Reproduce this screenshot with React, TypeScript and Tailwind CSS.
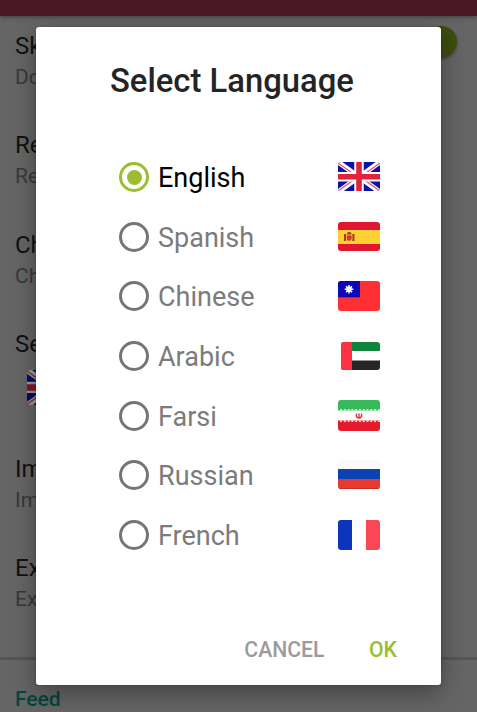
import type { ReactNode } from "react";

function UnitedKingdom() {
  return (
    <>
      <rect width="42" height="30" fill="#0b12a8" />
      <path d="M0 0L42 30M42 0L0 30" stroke="#fff" strokeWidth="5" />
      <path d="M0 1L17 13M42 1L25 13M0 29L17 17M42 29L25 17" stroke="#f0535f" strokeWidth="1.3" />
      <path d="M21 0V30M0 14.800H42" stroke="#fff" strokeWidth="9.500" />
      <path d="M21 0V30M0 14.800H42" stroke="#e2233b" strokeWidth="5.600" />
    </>
  );
}

function Spain() {
  return (
    <>
      <rect width="42" height="30" fill="#df1730" />
      <rect y="8" width="42" height="14" fill="#ffd034" />
      <path d="M7 12.500V18.500M15.400 12.500V18.500" stroke="#b8322c" strokeWidth="2" />
      <path d="M5.800 12.800H8.200M14.200 12.800H16.600M5.800 18.300H8.200M14.200 18.300H16.600" stroke="#8e3b2b" strokeWidth="1" />
      <path d="M8.800 13.500H13.600V16.700Q13.600 18.800 11.200 18.800T8.800 16.700Z" fill="#c52b2b" />
      <path d="M8.800 12.600Q8.800 10 11.200 9.800Q13.600 10 13.600 12.600Z" fill="#a13a24" />
      <path d="M10.300 15V17.500M12.200 15V17.500" stroke="#e58a50" strokeWidth=".5" />
    </>
  );
}

function Taiwan() {
  return (
    <>
      <rect width="42" height="30" fill="#ff3033" />
      <rect width="22" height="16.300" fill="#0b08b4" />
      <path d="M11 4V12.600M6.700 8.300H15.300M8 5.300L14 11.300M14 5.300L8 11.300" stroke="#fff" strokeWidth="1.500" />
      <circle cx="11" cy="8.300" r="2.700" fill="#fff" />
    </>
  );
}

function Emirates() {
  return (
    <>
      <rect width="39" height="28" fill="#fff" />
      <rect width="39" height="9" fill="#0f843d" />
      <rect y="18.500" width="39" height="9.500" fill="#262626" />
      <rect width="11" height="28" fill="#ff3044" />
    </>
  );
}

function Iran() {
  return (
    <>
      <rect width="42" height="31" fill="#fff" />
      <rect width="42" height="10.500" fill="#37b85a" />
      <rect y="20.500" width="42" height="10.500" fill="#e31b2d" />
      <path d="M2 9.800H42" stroke="#d8f4df" strokeWidth="1.500" strokeDasharray="1.9 1.9" />
      <path d="M2 21.200H42" stroke="#ffe0e2" strokeWidth="1.500" strokeDasharray="1.9 1.9" />
      <path d="M18.800 13.500Q17.300 16.500 20.300 18M23.200 13.500Q24.700 16.500 21.700 18M21 13.500V18.700" fill="none" stroke="#dc3540" strokeWidth="1.400" />
    </>
  );
}

function Russia() {
  return (
    <>
      <rect width="42" height="29" fill="#fafafa" />
      <rect y="9" width="42" height="10" fill="#0b43b5" />
      <rect y="19" width="42" height="10" fill="#e63a2f" />
      <path d="M0 28.500H42" stroke="#cf2923" />
    </>
  );
}

function France() {
  return (
    <>
      <rect width="42" height="30" fill="#fff" />
      <rect width="14" height="30" fill="#0d34bd" />
      <rect x="28" width="14" height="30" fill="#fa4655" />
      <path d="M14 .25H28M14 29.750H28" stroke="#eee" strokeWidth=".5" />
    </>
  );
}

function Flag({ width = 42, height = 30, children }: { width?: number; height?: number; children: ReactNode }) {
  return (
    <svg width={width} height={height} viewBox={`0 0 ${width} ${height}`} className="-mt-px shrink-0 rounded-[3px]">
      {children}
    </svg>
  );
}

const languages = [
  { name: "English", flag: <Flag height={29}><UnitedKingdom /></Flag> },
  { name: "Spanish", flag: <Flag height={29}><Spain /></Flag> },
  { name: "Chinese", flag: <Flag><Taiwan /></Flag> },
  { name: "Arabic", flag: <Flag width={39} height={28}><Emirates /></Flag> },
  { name: "Farsi", flag: <Flag height={31}><Iran /></Flag> },
  { name: "Russian", flag: <Flag height={29}><Russia /></Flag> },
  { name: "French", flag: <Flag><France /></Flag> },
];

function Radio({ checked }: { checked: boolean }) {
  return (
    <span
      className={`flex size-[30px] shrink-0 items-center justify-center rounded-full border-[3px] ${
        checked ? "border-[#9abe2e]" : "border-[#757575]"
      }`}
    >
      {checked && <span className="size-[15px] rounded-full bg-[#9abe2e]" />}
    </span>
  );
}

function Setting({ title, note }: { title: string; note?: string }) {
  return (
    <div className={note ? "h-[99.3px]" : "h-[125.2px]"}>
      <div className="text-[24px] leading-[30px] text-[#111]">{title}</div>
      {note ? (
        <div className="mt-[4px] text-[21px] leading-[24px] text-[#393939]">{note}</div>
      ) : (
        <div className="mt-[12.500px] ml-[12px] brightness-[.6]">
          <Flag width={50} height={35}>
            <g transform="scale(1.19 1.18)"><UnitedKingdom /></g>
          </Flag>
        </div>
      )}
    </div>
  );
}

export default function App() {
  return (
    <div className="relative h-[712px] w-[477px] overflow-hidden bg-[#656565] font-['Roboto','Liberation_Sans',sans-serif]">
      <div className="h-4 bg-[#4c1724] shadow-[0_1px_5px_rgba(0,0,0,0.4)]" />
      <div className="flex h-[641px] justify-between pt-[15px] pl-[15px]">
        <div>
          <Setting title="Sk" note="Do" />
          <Setting title="Re" note="Re" />
          <Setting title="Ch" note="Ch" />
          <Setting title="Se" />
          <Setting title="Im" note="Im" />
          <Setting title="Ex" note="Ex" />
        </div>
        <div className="-mt-[5px] mr-5 size-[31px] rounded-full bg-[#3d4d0f] shadow-[0_2px_3px_rgba(0,0,0,0.35)]" />
      </div>
      <div className="h-[3px] bg-[#555]" />
      <div className="pt-[26px] pl-[15px] text-[21px] leading-[26px] font-medium text-[#00483e]">Feed</div>

      <div className="absolute top-[27px] left-[36px] flex h-[658px] w-[405px] flex-col rounded-[3px] bg-white shadow-[0_8px_24px_rgba(0,0,0,0.35),0_0_2px_rgba(0,0,0,0.3)]">
        <h1 className="mt-[34px] ml-[74px] text-[32.800px] leading-[40px] font-medium whitespace-nowrap text-[#242424]">
          Select Language
        </h1>
        <div className="mt-[46.300px] mr-[61px] ml-[83px]">
          {languages.map(({ name, flag }, i) => (
            <div key={name} className="flex h-[59.670px] items-center">
              <Radio checked={i === 0} />
              <span className={`mt-[2px] ml-[9px] flex-1 text-[27px] leading-[34px] ${i === 0 ? "text-black" : "text-[#7b7b7b]"}`}>
                {name}
              </span>
              {flag}
            </div>
          ))}
        </div>
        <div className="mt-auto mr-[44px] mb-[21px] flex justify-end gap-[44.500px] text-[21.200px] leading-[28px] font-medium">
          <button className="text-[#9b9b9b]">CANCEL</button>
          <button className="text-[#9abe2e]">OK</button>
        </div>
      </div>
    </div>
  );
}
